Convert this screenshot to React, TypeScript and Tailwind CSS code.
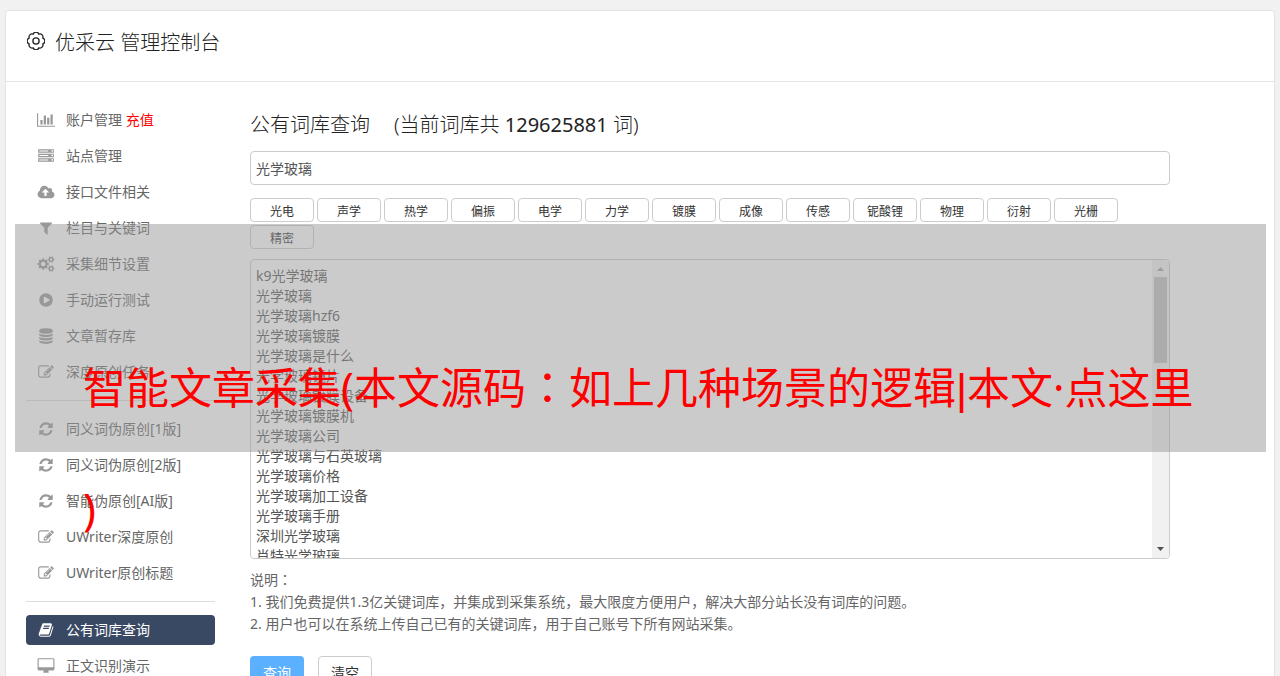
import type { ReactNode } from 'react';

const paths = {
  chart:
    'M640 896v512h-256v-512h256zm384-512v1024h-256v-1024h256zm1024 1152v128h-2048v-1536h128v1408h1920zm-640-896v768h-256v-768h256zm384-384v1152h-256v-1152h256z',
  server:
    'M128 1408h1024v-128h-1024v128zm0-512h1024v-128h-1024v128zm1568 448q0-40-28-68t-68-28-68 28-28 68 28 68 68 28 68-28 28-68zm-1568-960h1024v-128h-1024v128zm1568 448q0-40-28-68t-68-28-68 28-28 68 28 68 68 28 68-28 28-68zm0-512q0-40-28-68t-68-28-68 28-28 68 28 68 68 28 68-28 28-68zm96 832v384h-1792v-384h1792zm0-512v384h-1792v-384h1792zm0-512v384h-1792v-384h1792z',
  cloud:
    'M1280 928q0-14-9-23l-352-352q-9-9-23-9t-23 9l-351 351q-10 12-10 24 0 14 9 23t23 9h224v352q0 13 9.5 22.5t22.5 9.5h192q13 0 22.5-9.5t9.5-22.5v-352h224q13 0 22.5-9.5t9.5-22.5zm640 288q0 159-112.5 271.5t-271.5 112.5h-1088q-185 0-316.5-131.5t-131.5-316.5q0-130 70-240t188-165q-2-30-2-43 0-212 150-362t362-150q156 0 285.5 87t188.5 231q71-62 166-62 106 0 181 75t75 181q0 76-41 138 130 31 213.5 135.5t83.5 238.5z',
  filter:
    'M1595 295q17 41-14 70l-493 493v742q0 42-39 59-13 5-25 5-27 0-45-19l-256-256q-19-19-19-45v-486l-493-493q-31-29-14-70 17-39 59-39h1280q42 0 59 39z',
  cogs: 'M896 896q0-106-75-181t-181-75-181 75-75 181 75 181 181 75 181-75 75-181zm768 512q0-52-38-90t-90-38-90 38-38 90q0 53 37.5 90.5t90.5 37.5 90.5-37.5 37.5-90.5zm0-1024q0-52-38-90t-90-38-90 38-38 90q0 53 37.5 90.5t90.5 37.5 90.5-37.5 37.5-90.5zm-384 421v185q0 10-7 19.5t-16 10.5l-155 24q-11 35-32 76 34 48 90 115 7 11 7 20 0 12-7 19-23 30-82.5 89.5t-78.5 59.5q-11 0-21-7l-115-90q-37 19-77 31-11 108-23 155-7 24-30 24h-186q-11 0-20-7.5t-10-17.5l-23-153q-34-10-75-31l-118 89q-7 7-20 7-11 0-21-8-144-133-144-160 0-9 7-19 10-14 41-53t47-61q-23-44-35-82l-152-24q-10-1-17-9.5t-7-19.5v-185q0-10 7-19.5t16-10.5l155-24q11-35 32-76-34-48-90-115-7-11-7-20 0-12 7-20 22-30 82-89t79-59q11 0 21 7l115 90q34-18 77-32 11-108 23-154 7-24 30-24h186q11 0 20 7.5t10 17.5l23 153q34 10 75 31l118-89q8-7 20-7 11 0 21 8 144 133 144 160 0 8-7 19-12 16-42 54t-45 60q23 48 34 82l152 23q10 2 17 10.5t7 19.5zm640 533v140q0 16-149 31-12 27-30 52 51 113 51 138 0 4-4 7-122 71-124 71-8 0-46-47t-52-68q-20 2-30 2t-30-2q-14 21-52 68t-46 47q-2 0-124-71-4-3-4-7 0-25 51-138-18-25-30-52-149-15-149-31v-140q0-16 149-31 13-29 30-52-51-113-51-138 0-4 4-7 4-2 35-20t59-34 30-16q8 0 46 46.5t52 67.5q20-2 30-2t30 2q51-71 92-112l6-2q4 0 124 70 4 3 4 7 0 25-51 138 17 23 30 52 149 15 149 31zm0-1024v140q0 16-149 31-12 27-30 52 51 113 51 138 0 4-4 7-122 71-124 71-8 0-46-47t-52-68q-20 2-30 2t-30-2q-14 21-52 68t-46 47q-2 0-124-71-4-3-4-7 0-25 51-138-18-25-30-52-149-15-149-31v-140q0-16 149-31 13-29 30-52-51-113-51-138 0-4 4-7 4-2 35-20t59-34 30-16q8 0 46 46.5t52 67.5q20-2 30-2t30 2q51-71 92-112l6-2q4 0 124 70 4 3 4 7 0 25-51 138 17 23 30 52 149 15 149 31z',
  play: 'M896 128q209 0 385.5 103t279.5 279.5 103 385.5-103 385.5-279.5 279.5-385.5 103-385.5-103-279.5-279.5-103-385.5 103-385.5 279.5-279.5 385.5-103zm384 823q32-18 32-55t-32-55l-544-320q-31-19-64-1-32 19-32 56v640q0 37 32 56 16 8 32 8 17 0 32-9z',
  database:
    'M896 768q237 0 443-43t325-127v170q0 69-103 128t-280 93.5-385 34.5-385-34.5-280-93.5-103-128v-170q119 84 325 127t443 43zm0 768q237 0 443-43t325-127v170q0 69-103 128t-280 93.5-385 34.5-385-34.5-280-93.5-103-128v-170q119 84 325 127t443 43zm0-384q237 0 443-43t325-127v170q0 69-103 128t-280 93.5-385 34.5-385-34.5-280-93.5-103-128v-170q119 84 325 127t443 43zm0-1152q208 0 385 34.5t280 93.5 103 128v128q0 69-103 128t-280 93.5-385 34.5-385-34.5-280-93.5-103-128v-128q0-69 103-128t280-93.5 385-34.5z',
  edit: 'M888 1184l116-116-152-152-116 116v56h96v96h56zm440-720q-16-16-33 1l-350 350q-17 17-1 33t33-1l350-350q17-17 1-33zm80 594v190q0 119-84.5 203.5t-203.5 84.5h-832q-119 0-203.5-84.5t-84.5-203.5v-832q0-119 84.5-203.5t203.5-84.5h832q63 0 117 25 15 7 18 23 3 17-9 29l-49 49q-14 14-32 8-23-6-45-6h-832q-66 0-113 47t-47 113v832q0 66 47 113t113 47h832q66 0 113-47t47-113v-126q0-13 9-22l64-64q15-15 35-7t20 29zm-96-738l288 288-672 672h-288v-288zm444 132l-92 92-288-288 92-92q28-28 68-28t68 28l152 152q28 28 28 68t-28 68z',
  refresh:
    'M1639 1056q0 5-1 7-64 268-268 434.5t-478 166.5q-146 0-282.5-55t-243.5-157l-129 129q-19 19-45 19t-45-19-19-45v-448q0-26 19-45t45-19h448q26 0 45 19t19 45-19 45l-137 137q71 66 161 102t187 36q134 0 250-65t186-179q11-17 53-117 8-23 30-23h192q13 0 22.5 9.5t9.5 22.5zm25-800v448q0 26-19 45t-45 19h-448q-26 0-45-19t-19-45 19-45l138-138q-148-137-349-137-134 0-250 65t-186 179q-11 17-53 117-8 23-30 23h-199q-13 0-22.5-9.5t-9.5-22.5v-7q65-268 270-434.5t480-166.5q146 0 284 55.5t245 156.5l130-129q19-19 45-19t45 19 19 45z',
  book: 'M1703 478q40 57 18 129l-275 906q-19 64-76.5 107.5t-122.5 43.5h-923q-77 0-148.5-53.5t-99.5-131.5q-24-67-2-127 0-4 3-27t4-37q1-8-3-21.5t-3-19.5q2-11 8-21t16.5-23.5 16.5-23.5q23-38 45-91.5t30-91.5q3-10 .5-30t-.5-28q3-11 17-28t17-23q21-36 42-92t25-90q1-9-2.5-32t.5-28q4-13 22-30.5t22-22.5q19-26 42.5-84.5t27.5-96.5q1-8-3-25.5t-2-26.5q2-8 9-18t18-23 17-21q8-12 16.5-30.5t15-35 16-36 19.5-32 26.5-23.5 36-11.5 47.5 5.5l-1 3q38-9 51-9h761q74 0 114 56t18 130l-274 906q-36 119-71.5 153.5t-128.5 34.5h-869q-27 0-38 15-11 16-1 43 24 70 144 70h923q29 0 56-15.5t35-41.5l300-987q7-22 5-57 38 15 59 43zm-1064 2q-4 13 2 22.5t20 9.5h608q13 0 25.5-9.5t16.5-22.5l21-64q4-13-2-22.5t-20-9.5h-608q-13 0-25.5 9.5t-16.5 22.5zm-83 256q-4 13 2 22.5t20 9.5h608q13 0 25.5-9.5t16.5-22.5l21-64q4-13-2-22.5t-20-9.5h-608q-13 0-25.5 9.5t-16.5 22.5z',
  desktop:
    'M1792 992v-832q0-13-9.5-22.5t-22.5-9.5h-1600q-13 0-22.5 9.5t-9.5 22.5v832q0 13 9.5 22.5t22.5 9.5h1600q13 0 22.5-9.5t9.5-22.5zm128-832v1088q0 66-47 113t-113 47h-544q0 37 16 77.5t32 71 16 43.5q0 26-19 45t-45 19h-512q-26 0-45-19t-19-45q0-14 16-44t32-70 16-78h-544q-66 0-113-47t-47-113v-1088q0-66 47-113t113-47h1600q66 0 113 47t47 113z',
};

const boxes = {
  wide: '0 0 2048 1792',
  medium: '-64 0 2048 1792',
  square: '-128 0 2048 1792',
};

function Glyph({ name, box = 'square' }: { name: keyof typeof paths; box?: keyof typeof boxes }) {
  return (
    <svg viewBox={boxes[box]} className="h-4 w-[18px]" fill="currentColor" aria-hidden="true">
      <path d={paths[name]} />
    </svg>
  );
}

function GearOutline() {
  return (
    <svg
      viewBox="1 1 22 22"
      className="mt-[5px] size-[18px]"
      fill="none"
      stroke="currentColor"
      strokeWidth="1.6"
      strokeLinejoin="round"
      aria-hidden="true"
    >
      <path d="M8.5 3.7A3.7 3.7 0 0 1 15.5 3.7A3.7 3.7 0 0 1 20.3 8.5A3.7 3.7 0 0 1 20.3 15.5A3.7 3.7 0 0 1 15.5 20.3A3.7 3.7 0 0 1 8.5 20.3A3.7 3.7 0 0 1 3.7 15.5A3.7 3.7 0 0 1 3.7 8.5A3.7 3.7 0 0 1 8.5 3.7Z" />
      <circle cx="12" cy="12" r="3.8" />
    </svg>
  );
}

function NavItem({ icon, children, active = false }: { icon: ReactNode; children: ReactNode; active?: boolean }) {
  return (
    <li>
      <a
        href="#"
        className={
          active
            ? 'flex h-[30px] items-center gap-[11px] rounded bg-[#394963] pl-[11px] text-white'
            : 'flex h-[30px] items-center gap-[11px] rounded pl-[11px] text-[#666]'
        }
      >
        <span className={active ? 'text-white' : 'text-[#999]'}>{icon}</span>
        <span>{children}</span>
      </a>
    </li>
  );
}

const tags = ['光电', '声学', '热学', '偏振', '电学', '力学', '镀膜', '成像', '传感', '铌酸锂', '物理', '衍射', '光栅', '精密'];

const words = [
  'k9光学玻璃',
  '光学玻璃',
  '光学玻璃hzf6',
  '光学玻璃镀膜',
  '光学玻璃是什么',
  '光学玻璃镜片',
  '光学玻璃镀膜设备',
  '光学玻璃镀膜机',
  '光学玻璃公司',
  '光学玻璃与石英玻璃',
  '光学玻璃价格',
  '光学玻璃加工设备',
  '光学玻璃手册',
  '深圳光学玻璃',
  '肖特光学玻璃',
];

function Colon() {
  return <span className="font-['Noto_Sans_CJK_JP',sans-serif]">：</span>;
}

export default function App() {
  return (
    <div className="relative h-screen overflow-hidden bg-[#f1f1f1] px-[5px] pt-[10px] font-['Noto_Sans','Noto_Sans_CJK_SC',sans-serif] text-sm text-[#666]">
      <div className="rounded border border-[#e4e4e4] bg-white pb-10">
        <header className="flex h-[71px] items-start gap-[10px] border-b border-[#e4e4e4] pt-4 pl-[21px] text-[#222]">
          <GearOutline />
          <h1 className="text-xl leading-8 font-light">优采云 管理控制台</h1>
        </header>

        <div className="flex gap-[35px] px-5 pt-[23px]">
          <nav className="w-[189px] shrink-0 leading-5">
            <ul className="flex flex-col gap-[6px]">
              <NavItem icon={<Glyph name="chart" box="wide" />}>
                账户管理 <span className="text-[#f00]">充值</span>
              </NavItem>
              <NavItem icon={<Glyph name="server" />}>站点管理</NavItem>
              <NavItem icon={<Glyph name="cloud" box="medium" />}>接口文件相关</NavItem>
              <NavItem icon={<Glyph name="filter" />}>栏目与关键词</NavItem>
              <NavItem icon={<Glyph name="cogs" box="medium" />}>采集细节设置</NavItem>
              <NavItem icon={<Glyph name="play" />}>手动运行测试</NavItem>
              <NavItem icon={<Glyph name="database" />}>文章暂存库</NavItem>
              <NavItem icon={<Glyph name="edit" />}>深度原创任务</NavItem>
            </ul>
            <hr className="my-[13px] border-[#ddd]" />
            <ul className="flex flex-col gap-[6px]">
              <NavItem icon={<Glyph name="refresh" />}>同义词伪原创[1版]</NavItem>
              <NavItem icon={<Glyph name="refresh" />}>同义词伪原创[2版]</NavItem>
              <NavItem icon={<Glyph name="refresh" />}>智能伪原创[AI版]</NavItem>
              <NavItem icon={<Glyph name="edit" />}>UWriter深度原创</NavItem>
              <NavItem icon={<Glyph name="edit" />}>UWriter原创标题</NavItem>
            </ul>
            <hr className="my-[13px] border-[#ddd]" />
            <ul className="flex flex-col gap-[6px]">
              <NavItem icon={<Glyph name="book" />} active>
                公有词库查询
              </NavItem>
              <NavItem icon={<Glyph name="desktop" box="medium" />}>正文识别演示</NavItem>
            </ul>
          </nav>

          <main className="max-w-[920px] min-w-0 flex-1 pt-[5px]">
            <h2 className="flex gap-6 text-xl leading-[30px] font-light text-[#222]">
              <span>公有词库查询</span>
              <span>
                (当前词库共 <span className="font-normal">129625881</span> 词)
              </span>
            </h2>
            <input
              type="text"
              aria-label="关键词"
              defaultValue="光学玻璃"
              className="mt-[11px] block h-[34px] w-full rounded border border-[#ccc] px-[5px] text-[#555]"
            />
            <div className="mt-[13px] flex flex-wrap gap-[3px] pr-10">
              {tags.map((tag) => (
                <button
                  key={tag}
                  type="button"
                  className="h-6 w-16 rounded border border-[#ccc] bg-white pt-1 text-xs text-[#333]"
                >
                  {tag}
                </button>
              ))}
            </div>
            <div className="mt-[10px] flex h-[300px] overflow-hidden rounded border border-[#ccc]">
              <textarea
                aria-label="查询结果"
                defaultValue={words.join('\n')}
                className="min-w-0 flex-1 resize-none overflow-hidden px-[5px] pt-[6px] leading-5 text-[#555]"
              />
              <div className="flex w-[17px] flex-col items-center justify-between bg-[#f1f1f1] py-[7px]" aria-hidden="true">
                <div className="flex flex-col items-center gap-[6px]">
                  <svg viewBox="0 0 7 4" className="h-1 w-[7px]" fill="#a3a3a3">
                    <path d="M0 4 3.5 0 7 4z" />
                  </svg>
                  <div className="h-[86px] w-[13px] bg-[#c1c1c1]" />
                </div>
                <svg viewBox="0 0 7 4" className="h-1 w-[7px]" fill="#505050">
                  <path d="M0 0 3.5 4 7 0z" />
                </svg>
              </div>
            </div>
            <div className="mt-[9px] leading-[22px]">
              <p>
                说明
                <Colon />
              </p>
              <p>1. 我们免费提供1.3亿关键词库，并集成到采集系统，最大限度方便用户，解决大部分站长没有词库的问题。</p>
              <p>2. 用户也可以在系统上传自己已有的关键词库，用于自己账号下所有网站采集。</p>
            </div>
            <div className="mt-[21px] flex gap-[14px]">
              <button type="button" className="h-[34px] w-[54px] rounded bg-[#5bb0ff] text-white">
                查询
              </button>
              <button type="button" className="h-[34px] w-[54px] rounded border border-[#ccc] bg-white text-[#333]">
                清空
              </button>
            </div>
          </main>
        </div>
      </div>

      <div className="absolute top-[224px] right-[14px] left-[15px] h-[228px] bg-[#979797]/50 pt-[101px] pr-[66px] pl-[68px]">
        <p className="text-[43px] leading-[120px] text-[#f00] [line-break:anywhere]">
          智能文章采集(本文源码
          <Colon />
          如上几种场景的逻辑<span className="font-['Liberation_Sans',sans-serif]">|</span>本文·点这里)
        </p>
      </div>
    </div>
  );
}
